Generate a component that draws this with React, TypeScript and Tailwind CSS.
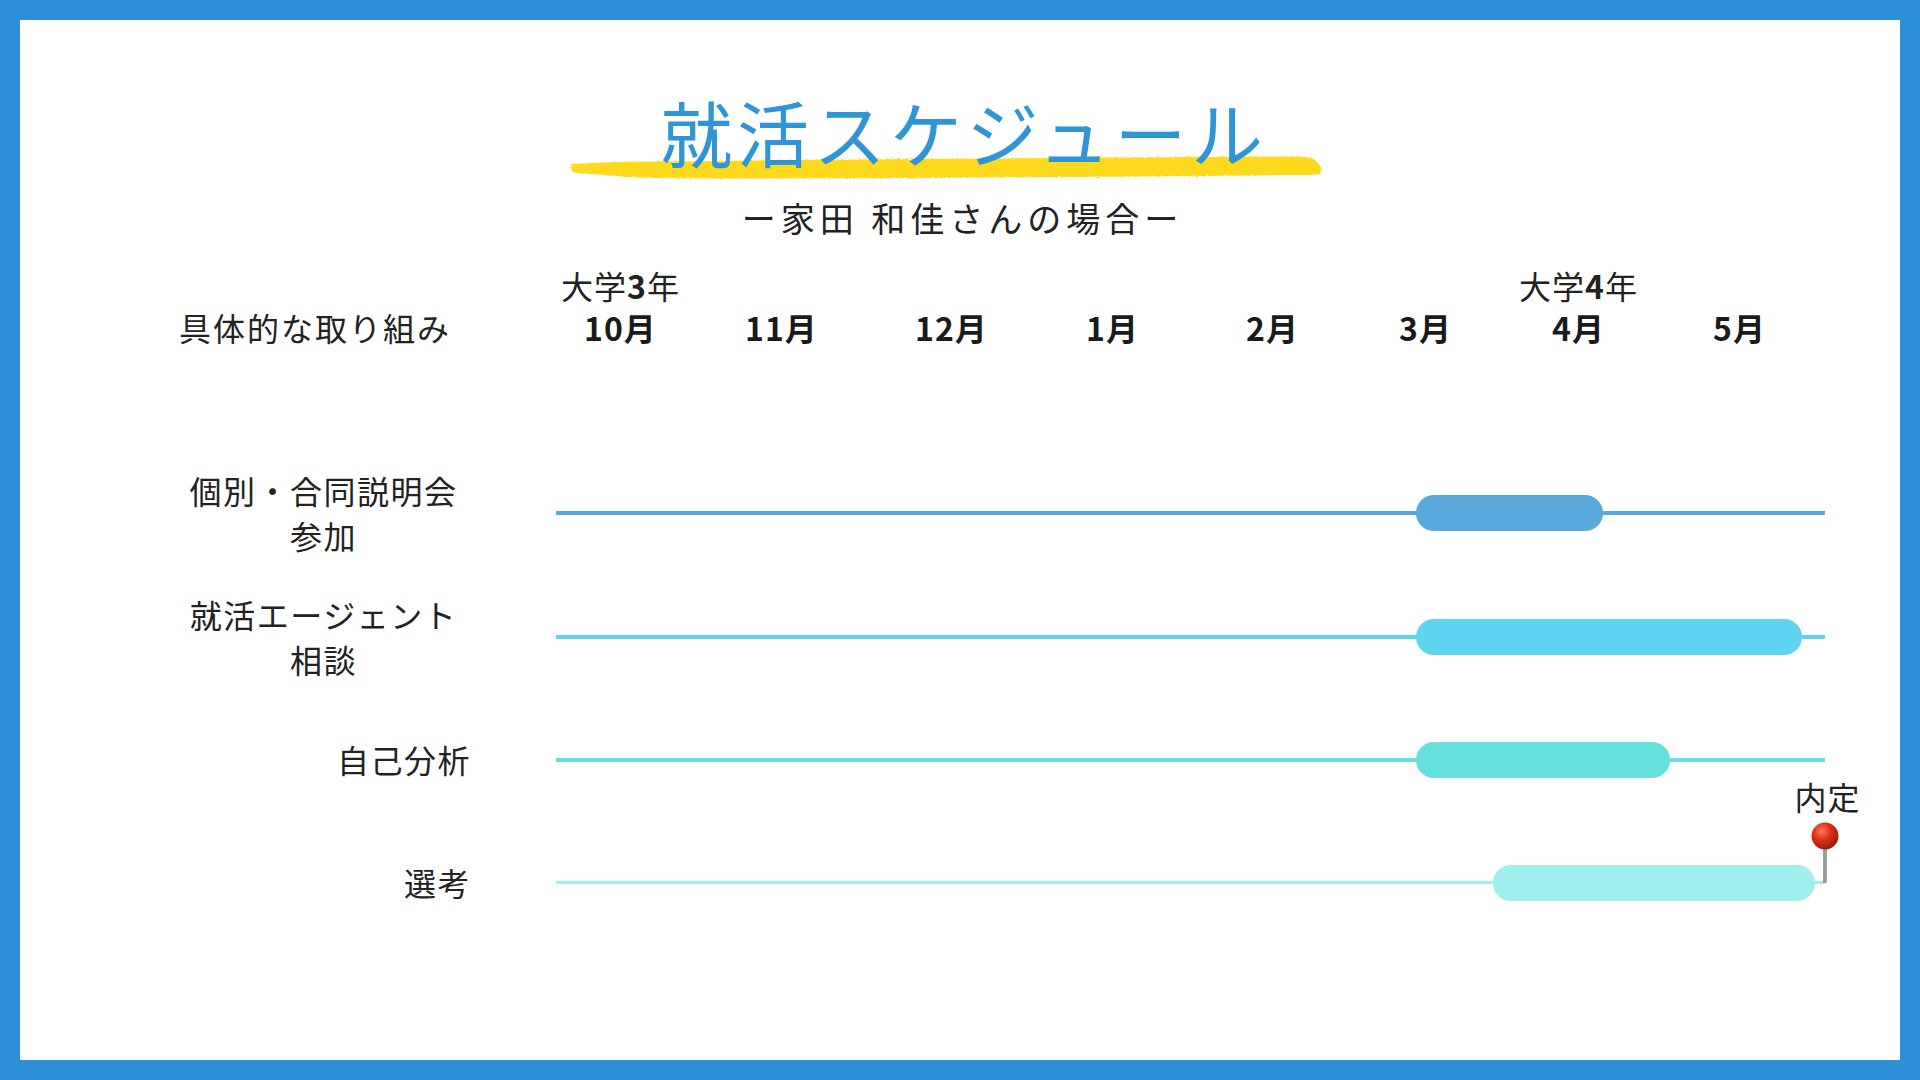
const CHART_LEFT = 556;

const months = [
  { label: "10月", w: "w-[160px]", year: { pre: "大学", num: "3" } },
  { label: "11月", w: "w-[162px]" },
  { label: "12月", w: "w-[178px]" },
  { label: "1月", w: "w-[144px]" },
  { label: "2月", w: "w-[176px]" },
  { label: "3月", w: "w-[130px]" },
  { label: "4月", w: "w-[176px]", year: { pre: "大学", num: "4" } },
  { label: "5月", w: "w-[146px]" },
];

type Row = {
  lines: string[];
  bg: string;
  line: string;
  h: string;
  start: number;
  end: number;
  pin?: boolean;
};

const rows: Row[] = [
  { lines: ["個別・合同説明会", "参加"], bg: "bg-[#5aa9dc]", line: "h-[4px]", h: "h-[126px]", start: 1416, end: 1603 },
  { lines: ["就活エージェント", "相談"], bg: "bg-[#5fd4f0]", line: "h-[4px]", h: "h-[122px]", start: 1416, end: 1802 },
  { lines: ["自己分析"], bg: "bg-[#66e0de]", line: "h-[4px]", h: "h-[123px]", start: 1416, end: 1670 },
  { lines: ["選考"], bg: "bg-[#a0eeee]", line: "h-[3px]", h: "h-[123px]", start: 1493, end: 1815, pin: true },
];

function Brush() {
  return (
    <svg
      className="absolute left-[-10px] top-[63px]"
      width="756"
      height="28"
      viewBox="0 0 756 28"
    >
      <filter id="rough">
        <feTurbulence type="fractalNoise" baseFrequency="0.9" numOctaves="2" seed="3" />
        <feDisplacementMap in="SourceGraphic" scale="3" />
      </filter>
      <path
        d="M1 10 L20 9 L70 7.5 L150 7 L230 6 L330 5 L430 4.5 L530 3.5 L630 3 L700 2.5 L730 2.5 L742 4 L748 9 L752 15 L750 20 L740 21 L680 21.5 L630 22 L500 23 L330 24 L200 24.5 L130 24.5 L90 24 L70 23.5 L45 22 L30 20.5 L12 19.5 L3 18.5 L1 14 Z"
        fill="#fed91b"
        filter="url(#rough)"
      />
    </svg>
  );
}

function Pin() {
  return (
    <svg className="absolute left-[1254px] bottom-1/2" width="30" height="62" viewBox="0 0 30 62">
      <defs>
        <radialGradient id="ball" cx="0.38" cy="0.32" r="0.7">
          <stop offset="0" stopColor="#ff7a55" />
          <stop offset="0.45" stopColor="#e0321a" />
          <stop offset="1" stopColor="#9c1706" />
        </radialGradient>
        <linearGradient id="needle" x1="0" x2="1" y1="0" y2="0">
          <stop offset="0" stopColor="#3e3e3e" />
          <stop offset="0.5" stopColor="#c8c8c8" />
          <stop offset="1" stopColor="#4a4a4a" />
        </linearGradient>
      </defs>
      <rect x="13.5" y="24" width="3" height="38" rx="1" fill="url(#needle)" />
      <circle cx="15" cy="15" r="13.5" fill="url(#ball)" />
    </svg>
  );
}

export default function App() {
  return (
    <div className="min-h-screen w-full bg-[#2d8fd5] p-[20px] font-['Noto_Sans_CJK_JP',sans-serif] text-[#222222]">
      <div className="h-[1040px] bg-white pt-[71px]">
        {/* Title */}
        <div className="relative mx-auto h-[80px] w-[760px]">
          <Brush />
          <h1 className="relative pl-[8px] text-center text-[72px] leading-[80px] tracking-[4.5px] text-[#2f95d6]">
            就活スケジュール
          </h1>
        </div>
        <p className="mt-[27px] pl-[5px] text-center text-[34px] leading-[40px] tracking-[5px]">
          ー家田 和佳さんの場合ー
        </p>

        {/* Header */}
        <div className="mt-[29px] flex items-end pl-[156px]">
          <div className="w-[364px] pl-[3px] text-[32px] leading-[36px] tracking-[2px]">
            具体的な取り組み
          </div>
          {months.map((m) => (
            <div key={m.label} className={`${m.w} flex flex-col items-center gap-[6px]`}>
              <div className="h-[36px] pl-[1px] text-[32px] leading-[36px] tracking-[1px]">
                {m.year && (
                  <>
                    {m.year.pre}
                    <span className="font-bold">{m.year.num}</span>年
                  </>
                )}
              </div>
              <div className="pl-[1px] text-[32px] font-bold leading-[36px] tracking-[1px] text-[#1a1a1a]">
                {m.label}
              </div>
            </div>
          ))}
        </div>

        {/* Rows */}
        <div className="mt-[105px] flex flex-col">
          {rows.map((r) => (
            <div key={r.lines[0]} className={`flex ${r.h} items-center pl-[156px]`}>
              <div
                className={`w-[295px] text-[32px] leading-[45px] tracking-[1.5px] ${
                  r.lines.length > 1 ? "text-center" : "text-right"
                }`}
              >
                {r.lines.map((l) => (
                  <div key={l}>{l}</div>
                ))}
              </div>
              <div className="relative ml-[85px] flex h-full w-[1269px] items-center">
                <div className={`w-full ${r.line} ${r.bg}`} />
                <div
                  className={`absolute top-1/2 h-[36px] -translate-y-1/2 rounded-full ${r.bg}`}
                  style={{ left: r.start - CHART_LEFT, width: r.end - r.start }}
                />
                {r.pin && (
                  <>
                    <div className="absolute bottom-[calc(50%+69px)] left-[1231px] w-[80px] pl-[1px] text-center text-[32px] leading-[36px] tracking-[1px]">
                      内定
                    </div>
                    <Pin />
                  </>
                )}
              </div>
            </div>
          ))}
        </div>
      </div>
    </div>
  );
}
